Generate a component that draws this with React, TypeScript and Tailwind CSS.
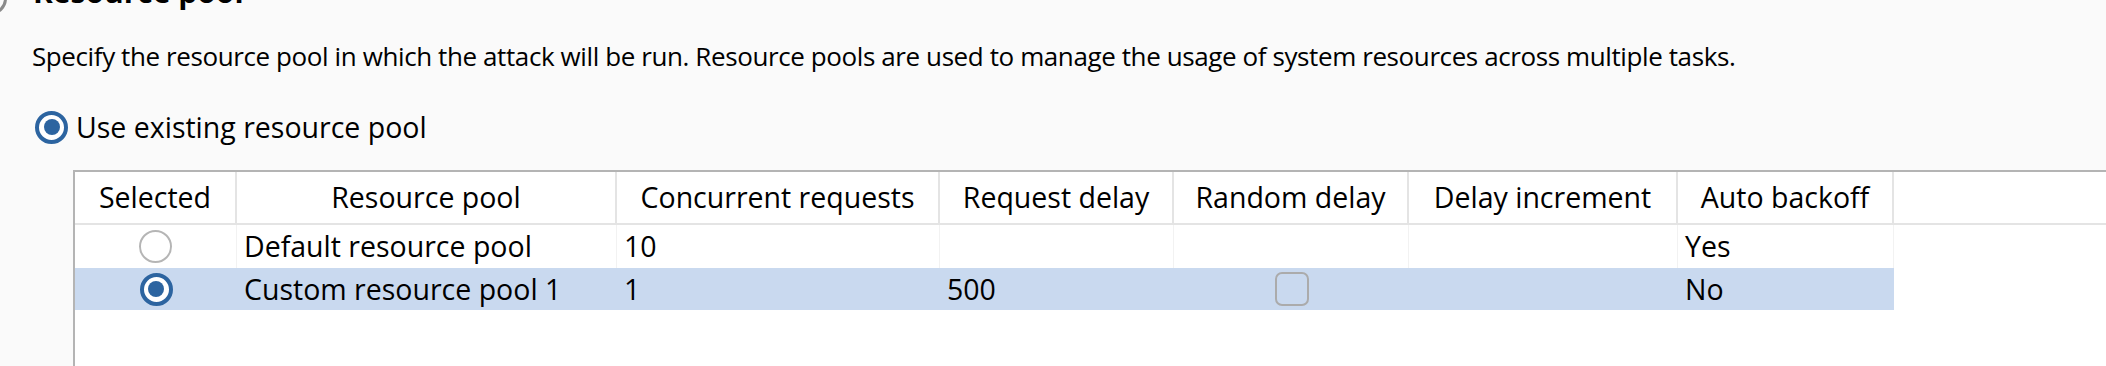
import React from "react";

type Row = {
  selected: boolean;
  name: string;
  concurrent: string;
  delay: string;
  random: boolean | null;
  increment: string;
  backoff: string;
};

const rows: Row[] = [
  {
    selected: false,
    name: "Default resource pool",
    concurrent: "10",
    delay: "",
    random: null,
    increment: "",
    backoff: "Yes",
  },
  {
    selected: true,
    name: "Custom resource pool 1",
    concurrent: "1",
    delay: "500",
    random: false,
    increment: "",
    backoff: "No",
  },
];

const headers = [
  "Selected",
  "Resource pool",
  "Concurrent requests",
  "Request delay",
  "Random delay",
  "Delay increment",
  "Auto backoff",
];

const grid =
  "grid grid-cols-[162px_380px_323px_234px_235px_269px_216px_1fr]";

function Radio({ checked, muted }: { checked: boolean; muted?: boolean }) {
  if (!checked) {
    return (
      <span
        className={`block h-[33px] w-[33px] rounded-full border-2 ${
          muted ? "border-[#b5b5b5]" : "border-[#8a8a8a]"
        } bg-white`}
      />
    );
  }
  return (
    <span className="flex h-[33px] w-[33px] shrink-0 items-center justify-center rounded-full border-[4px] border-[#2c64a0] bg-white">
      <span className="block h-[16px] w-[16px] rounded-full bg-[#2c64a0]" />
    </span>
  );
}

export default function App() {
  return (
    <div className="flex h-[366px] w-[2106px] flex-col overflow-hidden bg-[#fafafa] font-['Open_Sans',sans-serif] text-[28.5px] text-black">
      <div className="-ml-[26px] -mt-[26px] flex h-[36px] items-start gap-[26px]">
        <span className="mt-[8px] block h-[33px] w-[33px] shrink-0 rounded-full border-[3px] border-[#8a8a8a]" />
        <span className="text-[30px] font-bold leading-[36px]">Resource pool</span>
      </div>

      <p className="mt-[28px] pl-[32px] text-[26px] leading-[36px] tracking-[-0.4px]">
        Specify the resource pool in which the attack will be run. Resource
        pools are used to manage the usage of system resources across multiple
        tasks.
      </p>

      <label className="mt-[35px] flex h-[36px] items-center gap-[8px] pl-[35px] leading-[36px]">
        <Radio checked />
        <span>Use existing resource pool</span>
      </label>

      <div className="ml-[73px] mt-[25px] flex-1 border-l-2 border-t-2 border-[#b4b4b4] bg-white">
        <div className={`${grid} h-[53px] border-b-2 border-[#e4e4e4]`}>
          {headers.map((h) => (
            <div
              key={h}
              className="flex items-center justify-center whitespace-nowrap border-r-2 border-[#e4e4e4] leading-none"
            >
              {h}
            </div>
          ))}
          <div />
        </div>

        {rows.map((row, i) => (
          <div
            key={row.name}
            className={`${grid} ${i === 0 ? "h-[43px]" : "h-[42px]"} leading-none`}
          >
            <Cell selected={row.selected} center>
              <Radio checked={row.selected} muted />
            </Cell>
            <Cell selected={row.selected}>{row.name}</Cell>
            <Cell selected={row.selected}>{row.concurrent}</Cell>
            <Cell selected={row.selected}>{row.delay}</Cell>
            <Cell selected={row.selected} center>
              {row.random !== null && (
                <span className="block h-[34px] w-[34px] rounded-[7px] border-2 border-[#ababab]" />
              )}
            </Cell>
            <Cell selected={row.selected}>{row.increment}</Cell>
            <Cell selected={row.selected}>{row.backoff}</Cell>
            <div className="bg-white" />
          </div>
        ))}
      </div>
    </div>
  );
}

function Cell({
  selected,
  center,
  children,
}: {
  selected: boolean;
  center?: boolean;
  children?: React.ReactNode;
}) {
  return (
    <div
      className={`flex items-center whitespace-nowrap px-[7px] ${
        center ? "justify-center" : ""
      } ${selected ? "bg-[#c9d9ef]" : "border-r border-[#f2f2f2]"}`}
    >
      {children}
    </div>
  );
}
